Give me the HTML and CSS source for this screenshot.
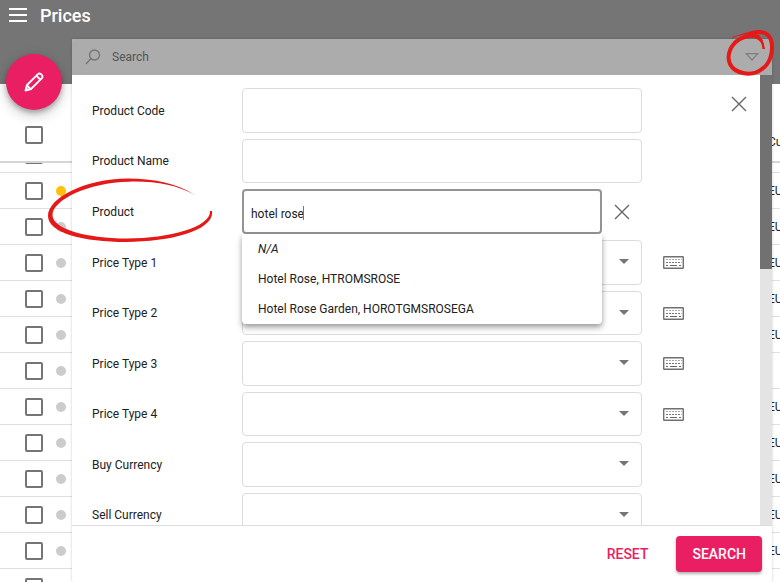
FILE: index.html
```html
<!DOCTYPE html>
<html lang="en">
<head>
<meta charset="utf-8">
<title>Prices</title>
<link rel="stylesheet" href="styles.css">
</head>
<body>
<svg class="defs" aria-hidden="true">
  <symbol id="close" viewBox="0 0 16 16"><path d="M1 1l14 14M15 1L1 15" fill="none" stroke="#666" stroke-width="1.4"/></symbol>
  <symbol id="arrow" viewBox="0 0 10 5"><path d="M0 0h10L5 5z" fill="#757575"/></symbol>
  <symbol id="keyboard" viewBox="0 0 21 13">
    <rect x=".7" y=".7" width="19.600" height="11.600" rx=".5" fill="none" stroke="#707070" stroke-width="1.400"/>
    <path d="M3 3.500h16" stroke="#aaa" stroke-dasharray="2 1"/>
    <path d="M3 6.500h15.500" stroke="#777" stroke-dasharray="2 1"/>
    <path d="M3 9.500h2M7 9.500h7M16 9.500h2" stroke="#666"/>
  </symbol>
</svg>

<header class="topbar">
  <button class="menu" type="button" aria-label="Menu"><svg width="18" height="14" viewBox="0 0 18 14"><path d="M0 1h18M0 7h18M0 13h18" stroke="#fff" stroke-width="2"/></svg></button>
  <h1>Prices</h1>
</header>

<main class="list">
  <table class="grid head">
    <thead><tr><th class="pick"><input type="checkbox" aria-label="Select all"></th><th></th><th class="cur">Currency</th></tr></thead>
  </table>
  <div class="scroll">
    <table class="grid rows">
      <tbody>
        <tr><td class="pick"><input type="checkbox" aria-label="Select row"></td><td></td><td class="cur"></td></tr>
        <tr><td class="pick"><input type="checkbox" aria-label="Select row"></td><td><i class="dot active"></i></td><td class="cur">EUR</td></tr>
        <tr><td class="pick"><input type="checkbox" aria-label="Select row"></td><td><i class="dot"></i></td><td class="cur">EUR</td></tr>
        <tr><td class="pick"><input type="checkbox" aria-label="Select row"></td><td><i class="dot"></i></td><td class="cur">EUR</td></tr>
        <tr><td class="pick"><input type="checkbox" aria-label="Select row"></td><td><i class="dot"></i></td><td class="cur">EUR</td></tr>
        <tr><td class="pick"><input type="checkbox" aria-label="Select row"></td><td><i class="dot"></i></td><td class="cur">EUR</td></tr>
        <tr><td class="pick"><input type="checkbox" aria-label="Select row"></td><td><i class="dot"></i></td><td class="cur"></td></tr>
        <tr><td class="pick"><input type="checkbox" aria-label="Select row"></td><td><i class="dot"></i></td><td class="cur">EUR</td></tr>
        <tr><td class="pick"><input type="checkbox" aria-label="Select row"></td><td><i class="dot"></i></td><td class="cur">EUR</td></tr>
        <tr><td class="pick"><input type="checkbox" aria-label="Select row"></td><td><i class="dot"></i></td><td class="cur">EUR</td></tr>
        <tr><td class="pick"><input type="checkbox" aria-label="Select row"></td><td><i class="dot"></i></td><td class="cur">EUR</td></tr>
        <tr><td class="pick"><input type="checkbox" aria-label="Select row"></td><td><i class="dot"></i></td><td class="cur">EUR</td></tr>
        <tr><td class="pick"><input type="checkbox" aria-label="Select row"></td><td><i class="dot"></i></td><td class="cur">EUR</td></tr>
      </tbody>
    </table>
  </div>
</main>

<button class="fab" type="button" aria-label="Edit"><svg width="20" height="20" viewBox="0 0 20 20" fill="none" stroke="#fff" stroke-width="1.900" stroke-linejoin="round"><path d="M1.500 18.500L3 13L13.700 2.300Q15.200 .8 16.900 2.100L17.900 3.100Q19.200 4.800 17.700 6.300L7 17z"/><path d="M12.500 3.800l3.700 3.700M3 13.500l3.500 3.500"/><path d="M1.200 18.800l1-3.600 2.600 2.600z" fill="#fff" stroke="none"/></svg></button>

<form class="search">
  <div class="bar">
    <svg width="16" height="16" viewBox="0 0 16 16" fill="none" stroke="#747474" stroke-width="1.300"><circle cx="9.500" cy="6" r="5"/><path d="M6 9.500L1 15"/></svg>
    <input type="text" placeholder="Search" aria-label="Search">
    <button type="button" aria-label="Search options"><svg width="14" height="8" viewBox="0 0 14 8"><path d="M1.200.7h11.600L7 7z" fill="none" stroke="#808080" stroke-width="1.200"/></svg></button>
  </div>
  <div class="body">
    <div class="fields">
      <div class="row"><label for="code">Product Code</label><input class="field" id="code" type="text"></div>
      <div class="row"><label for="name">Product Name</label><input class="field" id="name" type="text"></div>
      <div class="row">
        <label for="product">Product</label>
        <div class="combo">
          <input class="field" id="product" type="text" value="hotel rose" role="combobox" aria-expanded="true" aria-controls="options">
          <span class="caret"></span>
          <ul class="options" id="options" role="listbox">
            <li role="option"><em>N/A</em></li>
            <li role="option">Hotel Rose, HTROMSROSE</li>
            <li role="option">Hotel Rose Garden, HOROTGMSROSEGA</li>
          </ul>
        </div>
        <button class="icon clear" type="button" aria-label="Clear product"><svg width="16" height="16"><use href="#close"/></svg></button>
      </div>
      <div class="row"><label for="t1">Price Type 1</label><div class="select"><select class="field" id="t1"><option></option></select><svg width="10" height="5"><use href="#arrow"/></svg></div><button class="icon keys" type="button" aria-label="Enter price type 1"><svg width="21" height="13"><use href="#keyboard"/></svg></button></div>
      <div class="row"><label for="t2">Price Type 2</label><div class="select"><select class="field" id="t2"><option></option></select><svg width="10" height="5"><use href="#arrow"/></svg></div><button class="icon keys" type="button" aria-label="Enter price type 2"><svg width="21" height="13"><use href="#keyboard"/></svg></button></div>
      <div class="row"><label for="t3">Price Type 3</label><div class="select"><select class="field" id="t3"><option></option></select><svg width="10" height="5"><use href="#arrow"/></svg></div><button class="icon keys" type="button" aria-label="Enter price type 3"><svg width="21" height="13"><use href="#keyboard"/></svg></button></div>
      <div class="row"><label for="t4">Price Type 4</label><div class="select"><select class="field" id="t4"><option></option></select><svg width="10" height="5"><use href="#arrow"/></svg></div><button class="icon keys" type="button" aria-label="Enter price type 4"><svg width="21" height="13"><use href="#keyboard"/></svg></button></div>
      <div class="row"><label for="buy">Buy Currency</label><div class="select"><select class="field" id="buy"><option></option></select><svg width="10" height="5"><use href="#arrow"/></svg></div></div>
      <div class="row"><label for="sell">Sell Currency</label><div class="select"><select class="field" id="sell"><option></option></select><svg width="10" height="5"><use href="#arrow"/></svg></div></div>
    </div>
    <button class="icon close" type="button" aria-label="Close"><svg width="16" height="16"><use href="#close"/></svg></button>
    <div class="track"><div class="thumb" style="height:43%"></div></div>
  </div>
  <footer>
    <button class="reset" type="reset">RESET</button>
    <button class="submit" type="submit">SEARCH</button>
  </footer>
</form>

<svg class="mark mark-product" width="166" height="66" viewBox="0 0 166 66" aria-hidden="true"><path fill="#e61919" d="M147 17C128 5 105 .5 80 .5C36 1 0 20 0 38C0 55 36 64 78 64C124 64 167 52 164 33L162 33C163 49 122 60.500 79 60.500C38 60.500 4.500 51 4.500 37C4.500 22 40 4.500 81 3.700C107 3 129 7 147 17z"/></svg>
<svg class="mark mark-toggle" width="50" height="48" viewBox="0 0 50 48" aria-hidden="true"><path fill="none" stroke="#e61919" stroke-width="4" d="M23 5C34 1 42 3 45 11C48 22 44 35 36 40C26 48 9 45 4 35C0 26 5 15 14 10C21 6 29 6 33 8"/><path fill="#e61919" d="M6 8Q20 3 34 1L36 5Q20 4 6 9zM27 6Q37 4 39 20L36.500 20Q36 11 28 9z"/></svg>
</body>
</html>
```
FILE: styles.css
```css
* { box-sizing: border-box; }

body {
  position: relative;
  height: 100vh;
  margin: 0;
  overflow: hidden;
  background: #fff;
  color: #212121;
  font: 12px/16px Roboto, "Liberation Sans", sans-serif;
}

input, select, button { font: inherit; color: inherit; }
button { padding: 0; border: 0; background: none; }
svg { display: block; }
.defs { position: absolute; width: 0; height: 0; }

.topbar {
  display: flex;
  align-items: flex-start;
  gap: 13px;
  height: 84px;
  padding: 4px 9px;
  background: #757575;
  color: #fff;
}
.menu { display: flex; align-items: center; height: 22px; }
.topbar h1 { margin: 0; font-size: 18px; line-height: 24px; font-weight: 500; }

.list { padding-top: 24px; }
.grid { width: 100%; table-layout: fixed; border-collapse: separate; border-spacing: 0; }
.grid td, .grid th { height: 36px; padding: 0; border-bottom: 1px solid #e0e0e0; text-align: left; }
.grid th { height: 55px; border-bottom: 2px solid #d3d6d5; font-weight: 400; }
.grid .pick { width: 56px; padding-left: 25px; }
.grid .cur { width: 12px; white-space: nowrap; }
.grid th.cur { padding-top: 14px; }
.scroll { overflow: hidden; }
.rows { margin-top: -26px; }
.pick input {
  display: block;
  appearance: none;
  width: 18px;
  height: 18px;
  margin: 0;
  border: 2px solid #757575;
  border-radius: 2px;
  background: #fff;
}
.dot { display: block; width: 10px; height: 10px; border-radius: 50%; background: #ccc; }
.dot.active { background: #ffc107; }

.fab {
  position: absolute;
  top: 54px;
  left: 6px;
  display: grid;
  place-items: center;
  width: 56px;
  height: 56px;
  border-radius: 50%;
  background: #e91e63;
  box-shadow: 0 3px 5px rgba(0, 0, 0, .25), 0 5px 14px rgba(0, 0, 0, .2);
}

.search {
  position: absolute;
  inset: 39px 8px 0 72px;
  display: flex;
  flex-direction: column;
  background: #fff;
  border-radius: 2px;
  box-shadow: 0 0 3px rgba(0, 0, 0, .2);
}
.bar {
  display: flex;
  align-items: center;
  gap: 11px;
  height: 36px;
  padding: 0 13px;
  border-radius: 2px 2px 0 0;
  background: #acacac;
}
.bar input { flex: 1; min-width: 0; padding: 0; border: 0; outline: 0; background: none; }
.bar input::placeholder { color: #555; opacity: 1; }
.bar svg { flex: none; }

.body { display: flex; flex: 1; min-height: 0; }
.fields { flex: 1; min-width: 0; padding: 13px 0 0 20px; overflow: hidden; }
.row { display: flex; align-items: center; height: 45px; margin-bottom: 6px; }
.row:nth-child(2), .row:nth-child(2n+5) { height: 44px; }
.row label { flex: none; width: 150px; }
.field {
  display: block;
  width: 400px;
  height: 100%;
  padding: 0 8px;
  border: 1px solid #dcdcdc;
  border-radius: 4px;
  outline: 0;
  background: #fff;
}
.combo, .select { position: relative; height: 100%; }
.select .field { appearance: none; }
.select svg { position: absolute; top: 19px; right: 13px; pointer-events: none; }
.combo .field { width: 360px; padding: 4px 7px 0; border: 2px solid #949494; }
.caret { position: absolute; top: 17px; left: 61px; width: 1px; height: 14px; background: #777; }
.options {
  position: absolute;
  z-index: 1;
  top: 100%;
  left: 0;
  width: 360px;
  margin: 0;
  padding: 0;
  list-style: none;
  background: #fff;
  border-radius: 0 0 4px 4px;
  box-shadow: 0 3px 5px rgba(0, 0, 0, .3), 0 4px 8px rgba(0, 0, 0, .12);
}
.options li { padding: 7px 16px; }
.clear { margin-left: 12px; }
.keys { margin-left: 21px; }
.close { align-self: flex-start; margin: 21px 13px; }
.track { width: 12px; background: #e4e4e4; }
.thumb { background: #717171; }

.search footer {
  display: flex;
  justify-content: flex-end;
  gap: 28px;
  padding: 10px;
  border-top: 1px solid #dcdcdc;
}
footer button { height: 36px; font-size: 14px; font-weight: 500; }
.reset { color: #e91e63; }
.submit {
  padding: 0 16px;
  border-radius: 4px;
  background: #e91e63;
  color: #fff;
  box-shadow: 0 2px 3px rgba(0, 0, 0, .3);
}

.mark { position: absolute; pointer-events: none; }
.mark-product { top: 178px; left: 48px; }
.mark-toggle { top: 29px; left: 726px; }
```
